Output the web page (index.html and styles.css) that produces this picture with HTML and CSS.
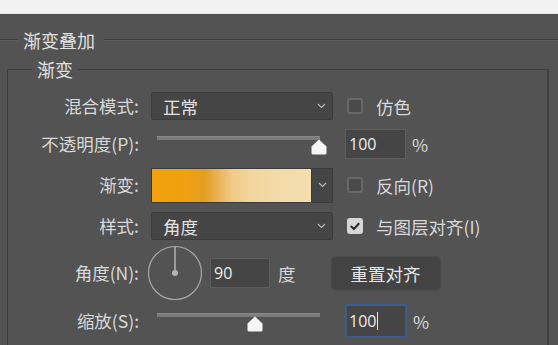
FILE: index.html
```html
<!DOCTYPE html>
<html lang="zh">
<head>
<meta charset="utf-8">
<link rel="stylesheet" href="styles.css">
</head>
<body>
<div class="topbar"></div>
<div class="panel">
  <div class="heading">
    <span class="rule rule-short"></span>
    <span class="title">渐变叠加</span>
    <span class="rule rule-long"></span>
  </div>
  <fieldset class="group">
    <legend>渐变</legend>
    <div class="form">
      <div class="label">混合模式:</div>
      <div class="select"><span>正常</span><svg class="chev" width="9" height="6" viewBox="0 0 9 6"><path d="M1 1 L4.5 4.5 L8 1" fill="none" stroke="#b8b8b8" stroke-width="1.2"/></svg></div>
      <div class="check"><span class="box"></span><span>仿色</span></div>

      <div class="label">不透明度(P):</div>
      <div class="slider"><div class="track"></div><svg class="thumb" style="left:160px" width="16" height="16" viewBox="0 0 16 16"><path d="M8 0.5 L15.5 7.5 V14 Q15.5 15.5 14 15.5 H2 Q0.5 15.5 0.5 14 V7.5 Z" fill="#f5f5f5"/></svg></div>
      <div class="numrow"><div class="num">100</div><span class="unit">%</span></div>

      <div class="label">渐变:</div>
      <div class="gradient"><div class="grad-bar"></div><div class="grad-arrow"><svg width="9" height="6" viewBox="0 0 9 6"><path d="M1 1 L4.5 4.5 L8 1" fill="none" stroke="#b8b8b8" stroke-width="1.2"/></svg></div></div>
      <div class="check"><span class="box"></span><span>反向(R)</span></div>

      <div class="label">样式:</div>
      <div class="select"><span>角度</span><svg class="chev" width="9" height="6" viewBox="0 0 9 6"><path d="M1 1 L4.5 4.5 L8 1" fill="none" stroke="#b8b8b8" stroke-width="1.2"/></svg></div>
      <div class="check"><span class="box box-on"><svg width="13" height="13" viewBox="0 0 13 13"><path d="M2.5 6.5 L5.3 9.3 L10.5 3.5" fill="none" stroke="#2a2a2a" stroke-width="2.2" stroke-linecap="round" stroke-linejoin="round"/></svg></span><span>与图层对齐(I)</span></div>

      <div class="label">角度(N):</div>
      <div class="angle-row">
        <svg class="dial" width="56" height="56" viewBox="0 0 56 56"><circle cx="28" cy="28" r="26.5" fill="none" stroke="#a9a9a9" stroke-width="1.2"/><line x1="28" y1="28" x2="28" y2="2" stroke="#b5b5b5" stroke-width="1.5"/><circle cx="28" cy="28" r="3" fill="#b3b3b3"/></svg>
        <div class="num num-angle">90</div>
        <span class="unit-deg">度</span>
        <div class="button">重置对齐</div>
      </div>

      <div class="label">缩放(S):</div>
      <div class="slider"><div class="track"></div><svg class="thumb" style="left:96px" width="16" height="16" viewBox="0 0 16 16"><path d="M8 0.5 L15.5 7.5 V14 Q15.5 15.5 14 15.5 H2 Q0.5 15.5 0.5 14 V7.5 Z" fill="#f5f5f5"/></svg></div>
      <div class="numrow"><div class="num num-focus">100<span class="caret"></span></div><span class="unit">%</span></div>
    </div>
  </fieldset>
</div>
</body>
</html>
```

FILE: styles.css
```css
* { box-sizing: border-box; }
html, body {
  margin: 0;
  padding: 0;
  height: 100%;
  overflow: hidden;
  background: #535353;
  font-family: "Noto Sans CJK SC", "Microsoft YaHei", sans-serif;
  color: #dcdcdc;
}
.topbar {
  height: 14px;
  background: #f2f2f2;
  border-bottom: 1px solid #e4e4e4;
}
.panel {
  background: #535353;
  height: 331px;
}
.heading {
  display: flex;
  align-items: center;
  height: 24px;
  margin-top: 14px;
}
.rule {
  height: 2px;
  border-top: 1px solid #3c3c3c;
  border-bottom: 1px solid #5c5c5c;
}
.rule-short { width: 18px; }
.rule-long { flex: 1; }
.title {
  font-size: 18px;
  line-height: 24px;
  padding: 0 9px 0 5px;
  color: #e0e0e0;
}
.group {
  margin: 5px 9px 0 7px;
  padding: 9px 0 30px 0;
  border: 1px solid #3d3d3d;
  border-right: 2px solid #404040;
  min-width: 0;
}
.group legend {
  font-size: 18px;
  line-height: 24px;
  padding: 0 5px;
  margin-left: 24px;
  color: #e0e0e0;
}
.form {
  display: grid;
  grid-template-columns: 131px 182px auto;
  grid-template-rows: 32px 44px 38px 44px 50px 46px;
  column-gap: 12px;
  align-items: center;
}
.label {
  text-align: right;
  font-size: 17.5px;
  line-height: 20px;
  color: #d8d8d8;
}
.select {
  height: 28px;
  background: #454545;
  border: 1px solid #3c3c3c;
  border-radius: 2px;
  display: flex;
  align-items: center;
  justify-content: space-between;
  padding: 0 6px 0 11px;
  font-size: 17.5px;
  color: #e2e2e2;
}
.chev { display: block; }
.check {
  display: flex;
  align-items: center;
  font-size: 17.5px;
  color: #d8d8d8;
  padding-left: 2px;
}
.box {
  width: 16px;
  height: 16px;
  border-radius: 3px;
  border: 2px solid #686868;
  background: #4a4a4a;
  margin-right: 13px;
  display: flex;
  align-items: center;
  justify-content: center;
}
.box-on {
  background: #d6d6d6;
  border-color: #d6d6d6;
}
.slider {
  position: relative;
  height: 22px;
}
.track {
  margin: 3px 0 0 6px;
  width: 163px;
  height: 4px;
  background: #7c7c7c;
  border-top: 1px solid #8a8a8a;
}
.thumb {
  position: absolute;
  top: 6px;
}
.numrow {
  display: flex;
  align-items: center;
}
.num {
  width: 61px;
  height: 30px;
  background: #454545;
  border: 1px solid #5e5e5e;
  padding-left: 3px;
  display: flex;
  align-items: center;
  font-family: "Open Sans", "Noto Sans", sans-serif;
  font-size: 16px;
  color: #ececec;
}
.num-focus {
  width: 62px;
  height: 34px;
  border: 2px solid #3c5c8e;
  padding-left: 2px;
}
.caret {
  width: 1px;
  height: 18px;
  background: #e8e8e8;
  margin-left: 1px;
}
.unit {
  margin-left: 6px;
  font-size: 17.5px;
  color: #d8d8d8;
}
.gradient {
  height: 35px;
  display: flex;
}
.grad-bar {
  flex: 1;
  border: 1px solid #3b3b3b;
  background: linear-gradient(90deg, #f2a20e 0%, #f0a010 22%, #e39e22 33%, #eab45a 42%, #f0c985 50%, #f2d59e 62%, #f3dba8 80%, #f3deb0 100%);
}
.grad-arrow {
  width: 21px;
  background: #454545;
  border: 1px solid #3c3c3c;
  border-left: none;
  display: flex;
  align-items: center;
  justify-content: center;
}
.angle-row {
  grid-column: 2 / 4;
  display: flex;
  align-items: center;
}
.dial {
  display: block;
  margin-left: -4px;
}
.num-angle {
  width: 60px;
  margin-left: 7px;
}
.unit-deg {
  margin-left: 8px;
  font-size: 17.5px;
  color: #d8d8d8;
}
.button {
  margin-left: 36px;
  width: 108px;
  height: 32px;
  border-radius: 4px;
  background: #434343;
  box-shadow: 0 0 0 1px #4a4a4a, 0 1px 2px rgba(0,0,0,0.25);
  display: flex;
  align-items: center;
  justify-content: center;
  font-size: 17.5px;
  color: #e6e6e6;
}
```
